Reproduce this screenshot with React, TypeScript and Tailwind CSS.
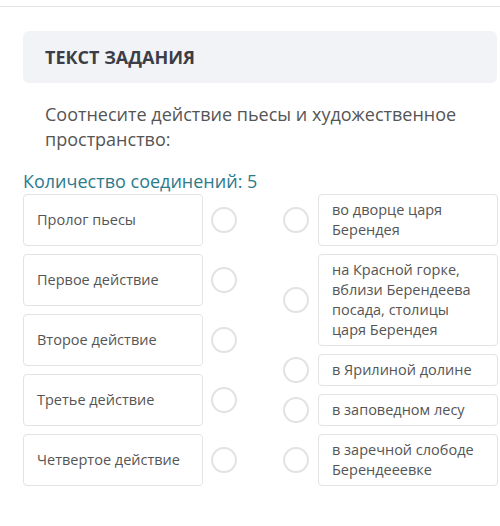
import React from "react";

type Option = { id: string; text: string };

const left: Option[] = [
  { id: "l1", text: "Пролог пьесы" },
  { id: "l2", text: "Первое действие" },
  { id: "l3", text: "Второе действие" },
  { id: "l4", text: "Третье действие" },
  { id: "l5", text: "Четвертое действие" },
];

const right: Option[] = [
  { id: "r1", text: "во дворце царя Берендея" },
  { id: "r2", text: "на Красной горке, вблизи Берендеева посада, столицы царя Берендея" },
  { id: "r3", text: "в Ярилиной долине" },
  { id: "r4", text: "в заповедном лесу" },
  { id: "r5", text: "в заречной слободе Берендееевке" },
];

const Dot = () => (
  <span className="block w-[26px] h-[26px] shrink-0 rounded-full border-2 border-[#e2e2e2] bg-white" />
);

export default function App() {
  return (
    <div
      className="w-[500px] h-[526px] bg-white overflow-hidden"
      style={{ fontFamily: '"Open Sans", "Noto Sans", sans-serif' }}
    >
      <div className="h-[7px] border-b border-[#e4e4e4]" />

      <div className="pl-[23px] pr-[3px] pt-[24px]">
        {/* task header */}
        <div className="h-[52px] rounded-md bg-[#f2f3f6] flex items-center px-[22px]">
          <h2 className="text-[18px] font-bold text-[#3b3e46]">ТЕКСТ ЗАДАНИЯ</h2>
        </div>

        <p className="mt-[19px] pl-[22px] pr-[10px] text-[18px] leading-[25px] text-[#555]">
          Соотнесите действие пьесы и художественное пространство:
        </p>

        <div className="mt-[17px] text-[18px] leading-[24px] text-[#2c7a8b]">
          Количество соединений: 5
        </div>

        <div className="mt-[1px] flex">
          {/* left column */}
          <div className="flex flex-col gap-2">
            {left.map((o) => (
              <div key={o.id} className="flex items-center">
                <div className="w-[180px] h-[52px] flex items-center px-[13px] rounded border border-[#e3e3e3] bg-white text-[14.5px] text-[#555]">
                  {o.text}
                </div>
                <div className="ml-[8px]">
                  <Dot />
                </div>
              </div>
            ))}
          </div>

          {/* right column */}
          <div className="ml-[46px] flex flex-col gap-2">
            {right.map((o) => (
              <div key={o.id} className="flex items-center">
                <Dot />
                <div className="ml-[9px] w-[180px] px-[13px] py-[5px] rounded border border-[#e3e3e3] bg-white text-[14.5px] leading-[20px] text-[#555]">
                  {o.text}
                </div>
              </div>
            ))}
          </div>
        </div>
      </div>
    </div>
  );
}
